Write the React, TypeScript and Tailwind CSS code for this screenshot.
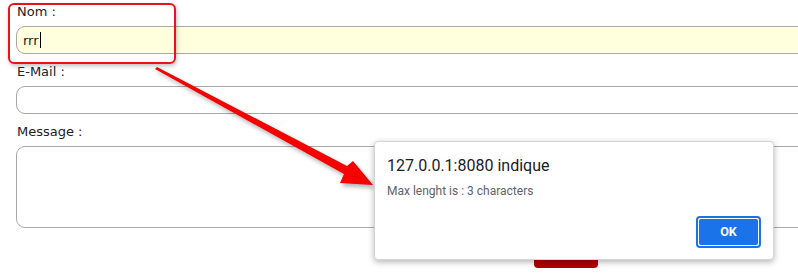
import React from "react";

export default function App() {
  return (
    <div className="relative w-[798px] h-[273px] overflow-hidden bg-white">
      <div className="flex flex-col items-start pl-4 pt-[3px] font-['DejaVu_Sans',Verdana,sans-serif] text-[13px] text-[#222]">
        <label className="h-[18px] leading-[18px] pl-px">Nom :</label>
        <div className="mt-[5px] w-[800px] h-[28px] rounded-[9px] border border-[#a9a9a9] bg-[#ffffde] flex items-center pl-[6px]">
          <span className="leading-none">rrr</span>
          <span className="ml-px w-px h-[16px] bg-black" />
        </div>
        <label className="mt-[9px] h-[18px] leading-[18px] pl-px">E-Mail :</label>
        <div className="mt-[5px] w-[800px] h-[28px] rounded-[9px] border border-[#a9a9a9] bg-white" />
        <label className="mt-[9px] h-[18px] leading-[18px] pl-px">Message :</label>
        <div className="mt-[5px] w-[800px] h-[82px] rounded-[9px] border border-[#a9a9a9] bg-white" />
        <div className="mt-[12px] ml-[518px] w-[64px] h-[28px] rounded-[4px] bg-[#b00000]" />
      </div>

      {/* red highlight */}
      <div className="absolute left-[8px] top-[3px] w-[168px] h-[61px] rounded-[6px] border-2 border-[#e8141b] shadow-[1px_2px_4px_rgba(0,0,0,0.25)]" />

      {/* arrow */}
      <svg className="absolute left-0 top-0 pointer-events-none" width="798" height="273" style={{ filter: "drop-shadow(2px 3px 2px rgba(0,0,0,0.3))" }}>
        <polygon points="155,69 157,67 347,166 353,161 373,185 340,183 344,174" fill="#f70000" />
      </svg>

      {/* dialog */}
      <div className="absolute left-[374px] top-[141px] w-[400px] h-[119px] bg-white rounded-[4px] border border-[#d6d6d6] shadow-[0_2px_6px_rgba(0,0,0,0.3)] font-['Roboto',sans-serif] flex flex-col pt-[14px] px-3">
        <div className="text-[16px] leading-[20px] text-[#202124]">127.0.0.1:8080 indique</div>
        <div className="mt-[7px] text-[12px] leading-[16px] text-[#5f6368]">Max lenght is : 3 characters</div>
        <div className="mt-[17px] flex justify-end">
          <div className="w-[65px] h-[32px] rounded-[4px] border-2 border-[#1a73e8] p-px">
            <div className="w-full h-full rounded-[2px] bg-[#1a73e8] flex items-center justify-center text-white text-[12.5px] font-bold">OK</div>
          </div>
        </div>
      </div>
    </div>
  );
}
